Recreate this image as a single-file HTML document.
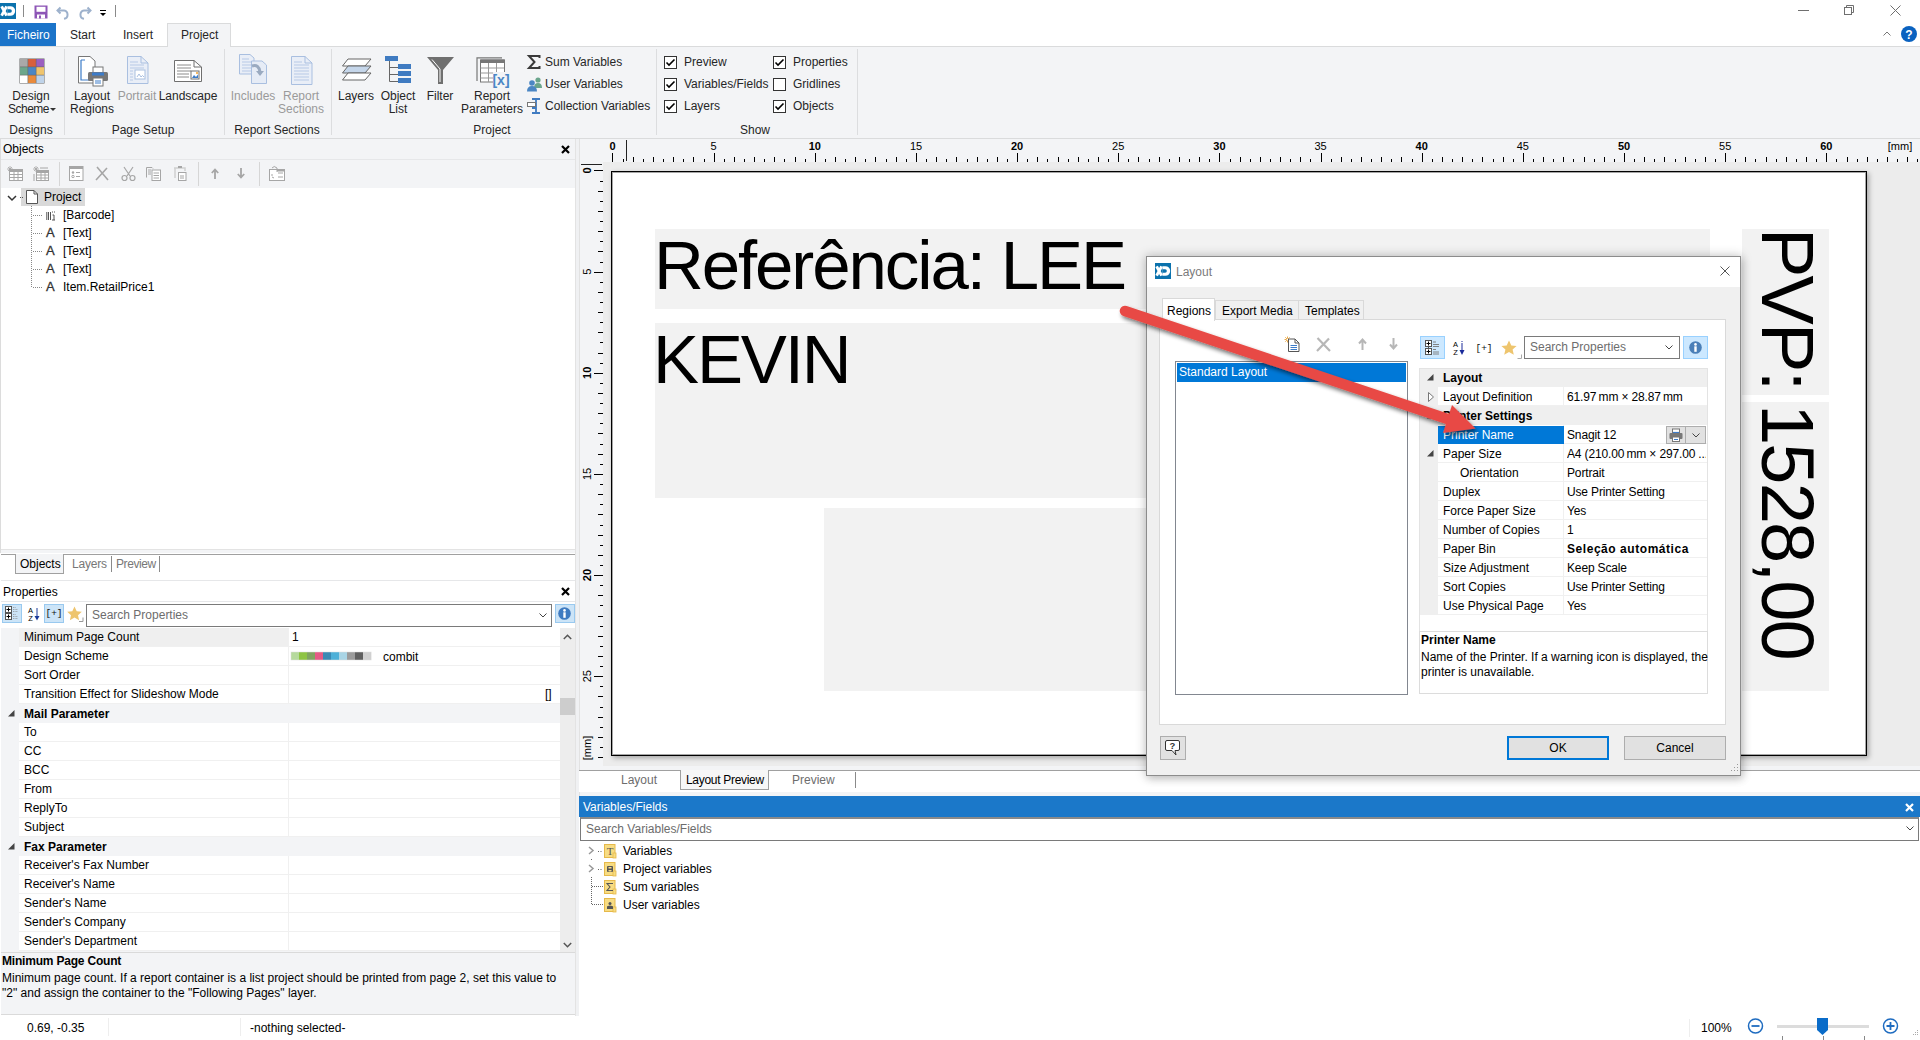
<!DOCTYPE html>
<html><head><meta charset="utf-8">
<style>
*{box-sizing:border-box;margin:0;padding:0}
html,body{width:1920px;height:1040px;overflow:hidden;background:#fff;font-family:"Liberation Sans",sans-serif;font-size:12px;color:#000}
.a{position:absolute}
.t{position:absolute;white-space:nowrap;line-height:14px}
svg{position:absolute;overflow:visible}
</style></head><body>
<div class="a" style="left:0px;top:0px;width:1920px;height:23px;background:#fff"></div>
<div class="a" style="left:0px;top:3px;width:16px;height:16px;background:#0b72ad"></div>
<svg style="left:0px;top:3px" width="16" height="16" viewBox="0 0 16 16"><path d="M1.6 3.4 L6.6 12.6 M6.6 3.4 L1.6 12.6" stroke="#fff" stroke-width="2.9"/><path fill="#fff" fill-rule="evenodd" d="M7.4 3.2 H10.4 A4.7 4.7 0 0 1 10.4 12.8 H7.4Z M7.6 6.3 H10.1 A1.75 1.75 0 0 1 10.1 9.8 H7.6Z"/></svg>
<div class="a" style="left:23px;top:5px;width:1px;height:12px;background:#8a8a8a"></div>
<svg style="left:34px;top:5px" width="14" height="14" viewBox="0 0 14 14"><rect x="0.5" y="0.5" width="13" height="13" fill="#8d55b6"/><rect x="2.5" y="1.8" width="9" height="5" fill="#fff"/><rect x="3" y="9.5" width="8" height="4" fill="#fff"/><rect x="5" y="10.5" width="2" height="3" fill="#8d55b6"/></svg>
<svg style="left:56px;top:6px" width="14" height="14" viewBox="0 0 14 14"><path d="M4.5 1.5 L1.5 4.5 L4.5 7.5" stroke="#9db1cc" stroke-width="2" fill="none"/><path d="M2 4.5 H8 A4.2 4.2 0 0 1 8 12.8" stroke="#9db1cc" stroke-width="2" fill="none"/></svg>
<svg style="left:78px;top:6px" width="14" height="14" viewBox="0 0 14 14"><path d="M9.5 1.5 L12.5 4.5 L9.5 7.5" stroke="#9db1cc" stroke-width="2" fill="none"/><path d="M12 4.5 H6 A4.2 4.2 0 0 0 6 12.8" stroke="#9db1cc" stroke-width="2" fill="none"/></svg>
<svg style="left:100px;top:10px" width="6" height="7" viewBox="0 0 6 7"><rect x="0" y="0" width="6" height="1" fill="#000"/><path d="M0 3 H6 L3 6Z" fill="#000"/></svg>
<div class="a" style="left:115px;top:5px;width:1px;height:12px;background:#8a8a8a"></div>
<div class="a" style="left:1798px;top:10px;width:11px;height:1px;background:#6f6f6f"></div>
<svg style="left:1844px;top:5px" width="11" height="11" viewBox="0 0 11 11"><rect x="0.5" y="2.5" width="7" height="7" fill="none" stroke="#6f6f6f"/><path d="M2.5 2.5 V0.5 H9.5 V7.5 H7.5" fill="none" stroke="#6f6f6f"/></svg>
<svg style="left:1890px;top:5px" width="11" height="11" viewBox="0 0 11 11"><path d="M0.5 0.5 L10.5 10.5 M10.5 0.5 L0.5 10.5" stroke="#6f6f6f" stroke-width="1"/></svg>
<div class="a" style="left:0px;top:23px;width:56px;height:23px;background:#1b74c9"></div>
<div class="t" style="left:7px;top:28px;color:#fff">Ficheiro</div>
<div class="t" style="left:70px;top:28px;color:#262626">Start</div>
<div class="t" style="left:123px;top:28px;color:#262626">Insert</div>
<div class="a" style="left:167px;top:23px;width:64px;height:24px;background:#f3f4f6;border:1px solid #dadbdc;border-bottom:none"></div>
<div class="t" style="left:181px;top:28px;color:#262626">Project</div>
<svg style="left:1883px;top:31px" width="8" height="5" viewBox="0 0 8 5"><path d="M0.5 4.5 L4 1 L7.5 4.5" stroke="#777" fill="none"/></svg>
<svg style="left:1901px;top:26px" width="16" height="16" viewBox="0 0 16 16"><circle cx="8" cy="8" r="8" fill="#0a62c0"/><text x="8" y="12.5" font-family="Liberation Sans" font-weight="bold" font-size="12" fill="#fff" text-anchor="middle">?</text></svg>
<div class="a" style="left:0px;top:46px;width:1920px;height:93px;background:#f3f4f6;border-top:1px solid #dadbdc;border-bottom:1px solid #dadbdc"></div>
<div class="a" style="left:168px;top:46px;width:62px;height:2px;background:#f3f4f6"></div>
<svg style="left:19px;top:58px" width="26" height="26" viewBox="0 0 26 26"><rect x="0.5" y="0.5" width="25" height="25" fill="#666"/><rect x="1.0" y="1.0" width="7.6" height="7.6" fill="#a9a9a9"/><rect x="9.2" y="1.0" width="7.6" height="7.6" fill="#d85f3c"/><rect x="17.4" y="1.0" width="7.6" height="7.6" fill="#9b5fc0"/><rect x="1.0" y="9.2" width="7.6" height="7.6" fill="#6ca68b"/><rect x="9.2" y="9.2" width="7.6" height="7.6" fill="#4b86c4"/><rect x="17.4" y="9.2" width="7.6" height="7.6" fill="#efc46d"/><rect x="1.0" y="17.4" width="7.6" height="7.6" fill="#ffffff"/><rect x="9.2" y="17.4" width="7.6" height="7.6" fill="#e98a3b"/><rect x="17.4" y="17.4" width="7.6" height="7.6" fill="#bfd3e9"/></svg>
<div class="t" style="left:-69px;width:200px;text-align:center;top:89px;color:#262626">Design</div>
<div class="t" style="left:8px;top:102px;color:#262626;letter-spacing:-0.5px">Scheme</div>
<svg style="left:50px;top:108px" width="6" height="3" viewBox="0 0 6 3"><path d="M0 0H6L3 3Z" fill="#333"/></svg>
<div class="t" style="left:-69px;width:200px;text-align:center;top:123px;color:#262626">Designs</div>
<div class="a" style="left:64px;top:49px;width:1px;height:86px;background:#dcdddf"></div>
<svg style="left:78px;top:56px" width="31" height="31" viewBox="0 0 31 31"><path d="M0.5 0.5 H12 L17 5 V27 H0.5Z" fill="#fff" stroke="#777"/><path d="M3 4 H7 M3 4 V24 H11" stroke="#3d7cc9" stroke-width="1.2" fill="none"/><rect x="15" y="11" width="10" height="6" fill="#fff" stroke="#777"/><rect x="10" y="16" width="20" height="9" rx="1.5" fill="#777"/><rect x="14" y="16.5" width="12" height="3" fill="#3d7cc9"/><rect x="15" y="22" width="10" height="8" fill="#fff" stroke="#777"/><path d="M17 25 H23 M17 27 H23" stroke="#3d7cc9"/></svg>
<div class="t" style="left:-8px;width:200px;text-align:center;top:89px;color:#262626">Layout</div>
<div class="t" style="left:-8px;width:200px;text-align:center;top:102px;color:#262626">Regions</div>
<svg style="left:127px;top:56px" width="22" height="28" viewBox="0 0 22 28"><path d="M0.5 0.5 H14 L21 7 V27.5 H0.5Z" fill="#e9eef7" stroke="#a9bfe0"/><path d="M14 0.5 V7 H21" fill="none" stroke="#a9bfe0"/><path d="M3 6 H11 M3 9 H17 M3 12 H17 M3 15 H6 M3 18 H6 M3 21 H6 M3 24 H6" stroke="#b7c9e6"/><rect x="8" y="14" width="10" height="9" fill="#fff" stroke="#a9bfe0"/><path d="M10 21 L12 18 L14 21 L15.5 19.5 L17 21" stroke="#a9bfe0" fill="none"/></svg>
<div class="t" style="left:37px;width:200px;text-align:center;top:89px;color:#9a9a9a">Portrait</div>
<svg style="left:174px;top:60px" width="28" height="22" viewBox="0 0 28 22"><path d="M0.5 0.5 H20 L27.5 7 V21.5 H0.5Z" fill="#fff" stroke="#6f6f6f"/><path d="M20 0.5 V7 H27.5" fill="none" stroke="#6f6f6f"/><path d="M3 5 H17 M3 8 H17 M3 11 H17 M3 14 H15 M3 17 H15" stroke="#8a8a8a"/><rect x="17" y="11" width="8" height="8" fill="#fff" stroke="#6f6f6f"/><path d="M18 18 L20 15 L22 17 L24 14.5 V18Z" fill="#3d7cc9"/><circle cx="23" cy="13" r="1" fill="#f0a030"/></svg>
<div class="t" style="left:88px;width:200px;text-align:center;top:89px;color:#262626">Landscape</div>
<div class="t" style="left:43px;width:200px;text-align:center;top:123px;color:#262626">Page Setup</div>
<div class="a" style="left:224px;top:49px;width:1px;height:86px;background:#dcdddf"></div>
<svg style="left:239px;top:54px" width="29" height="31" viewBox="0 0 29 31"><path d="M0.5 0.5 H11 L15 4 V20 H0.5Z" fill="#e9eef7" stroke="#a9bfe0"/><path d="M3 5 H10 M3 8 H12 M3 11 H12 M3 14 H12 M3 17 H12" stroke="#b7c9e6"/><path d="M12.5 7 H23 L27.5 11 V29.5 H12.5Z" fill="#e6ecf6" stroke="#a9bfe0"/><path d="M13 12 Q20 10 21 18" stroke="#9aaac0" stroke-width="3" fill="none"/><path d="M17 17 H25 L21 22Z" fill="#9aaac0"/></svg>
<div class="t" style="left:153px;width:200px;text-align:center;top:89px;color:#9a9a9a">Includes</div>
<svg style="left:291px;top:56px" width="22" height="29" viewBox="0 0 22 29"><path d="M0.5 0.5 H14 L21 7 V28.5 H0.5Z" fill="#e9eef7" stroke="#a9bfe0"/><path d="M14 0.5 V7 H21" fill="none" stroke="#a9bfe0"/><path d="M3 6 H11 M3 9 H18 M3 12 H18 M3 15 H18 M3 18 H18 M3 21 H18 M3 24 H18" stroke="#b7c9e6"/></svg>
<div class="t" style="left:201px;width:200px;text-align:center;top:89px;color:#9a9a9a">Report</div>
<div class="t" style="left:201px;width:200px;text-align:center;top:102px;color:#9a9a9a">Sections</div>
<div class="t" style="left:177px;width:200px;text-align:center;top:123px;color:#262626">Report Sections</div>
<div class="a" style="left:331px;top:49px;width:1px;height:86px;background:#dcdddf"></div>
<svg style="left:342px;top:58px" width="30" height="26" viewBox="0 0 30 26"><path d="M6 1 H29 L23 8 H0.5Z" fill="#fff" stroke="#666"/><path d="M6 8 H29 L23 15 H0.5Z" fill="#c5d6ea" stroke="#666"/><path d="M6 15 H29 L23 22 H0.5Z" fill="#fff" stroke="#666"/></svg>
<div class="t" style="left:256px;width:200px;text-align:center;top:89px;color:#262626">Layers</div>
<svg style="left:385px;top:56px" width="27" height="28" viewBox="0 0 27 28"><rect x="0" y="0" width="13" height="5" fill="#3f7bc1"/><path d="M4.5 5 V25.5 H13 M4.5 11.5 H13 M4.5 18.5 H13" stroke="#666" fill="none"/><rect x="13" y="8" width="13" height="5" fill="#3f7bc1"/><rect x="13" y="15" width="13" height="5" fill="#3f7bc1"/><rect x="13" y="22" width="13" height="5" fill="#3f7bc1"/></svg>
<div class="t" style="left:298px;width:200px;text-align:center;top:89px;color:#262626">Object</div>
<div class="t" style="left:298px;width:200px;text-align:center;top:102px;color:#262626">List</div>
<svg style="left:427px;top:57px" width="28" height="28" viewBox="0 0 28 28"><path d="M0 0 H27 L16 13 V27 H11 V13Z" fill="#6f6f6f"/><path d="M5 2.5 L13 12 V25" stroke="#fff" stroke-width="1" fill="none"/></svg>
<div class="t" style="left:340px;width:200px;text-align:center;top:89px;color:#262626">Filter</div>
<svg style="left:476px;top:57px" width="33" height="30" viewBox="0 0 33 30"><path d="M1 24 V0.8 H26" stroke="#777" stroke-width="1.2" fill="none"/><rect x="4.5" y="3" width="24" height="22" fill="#fff" stroke="#777"/><rect x="4.5" y="2.5" width="24" height="3.5" fill="#777"/><path d="M4.5 11 H28 M4.5 16 H28 M4.5 21 H28 M12.5 6 V25 M20.5 6 V25" stroke="#999"/><rect x="17" y="15" width="16" height="15" fill="#f3f4f6"/><text x="25" y="28" font-family="Liberation Sans" font-size="14" font-weight="bold" fill="#4a86c5" text-anchor="middle">[x]</text></svg>
<div class="t" style="left:392px;width:200px;text-align:center;top:89px;color:#262626">Report</div>
<div class="t" style="left:392px;width:200px;text-align:center;top:102px;color:#262626">Parameters</div>
<svg style="left:528px;top:55px" width="12" height="14" viewBox="0 0 12 14"><path d="M11.5 3 V1 H1 L6.5 7 L1 13 H11.5 V11" stroke="#3a3a3a" stroke-width="2" fill="none"/></svg>
<div class="t" style="left:545px;top:55px;color:#262626">Sum Variables</div>
<svg style="left:527px;top:77px" width="16" height="15" viewBox="0 0 16 15"><circle cx="11" cy="3" r="2.6" fill="#6aa58c"/><path d="M7 11 Q7 6 11 6 Q15 6 15 11Z" fill="#6aa58c"/><circle cx="5" cy="6" r="2.8" fill="#4b86c4"/><path d="M0 14.5 Q0 9 5 9 Q10 9 10 14.5Z" fill="#4b86c4"/></svg>
<div class="t" style="left:545px;top:77px;color:#262626">User Variables</div>
<svg style="left:527px;top:98px" width="15" height="16" viewBox="0 0 15 16"><path d="M5 1 H13 M9 1 V15 M5 15 H13 M5 10 H9" stroke="#3f7bc1" stroke-width="1.8" fill="none"/><rect x="0.5" y="4.5" width="8" height="4" fill="#fff" stroke="#777"/></svg>
<div class="t" style="left:545px;top:99px;color:#262626">Collection Variables</div>
<div class="t" style="left:392px;width:200px;text-align:center;top:123px;color:#262626">Project</div>
<div class="a" style="left:656px;top:49px;width:1px;height:86px;background:#dcdddf"></div>
<svg style="left:664px;top:56px" width="13" height="13" viewBox="0 0 13 13"><rect x="0.5" y="0.5" width="12" height="12" fill="#fff" stroke="#333"/><path d="M2.5 6.5 L5 9 L10.5 3.5" stroke="#000" stroke-width="1.6" fill="none"/></svg>
<div class="t" style="left:684px;top:55px;color:#262626">Preview</div>
<svg style="left:664px;top:78px" width="13" height="13" viewBox="0 0 13 13"><rect x="0.5" y="0.5" width="12" height="12" fill="#fff" stroke="#333"/><path d="M2.5 6.5 L5 9 L10.5 3.5" stroke="#000" stroke-width="1.6" fill="none"/></svg>
<div class="t" style="left:684px;top:77px;color:#262626">Variables/Fields</div>
<svg style="left:664px;top:100px" width="13" height="13" viewBox="0 0 13 13"><rect x="0.5" y="0.5" width="12" height="12" fill="#fff" stroke="#333"/><path d="M2.5 6.5 L5 9 L10.5 3.5" stroke="#000" stroke-width="1.6" fill="none"/></svg>
<div class="t" style="left:684px;top:99px;color:#262626">Layers</div>
<svg style="left:773px;top:56px" width="13" height="13" viewBox="0 0 13 13"><rect x="0.5" y="0.5" width="12" height="12" fill="#fff" stroke="#333"/><path d="M2.5 6.5 L5 9 L10.5 3.5" stroke="#000" stroke-width="1.6" fill="none"/></svg>
<div class="t" style="left:793px;top:55px;color:#262626">Properties</div>
<svg style="left:773px;top:78px" width="13" height="13" viewBox="0 0 13 13"><rect x="0.5" y="0.5" width="12" height="12" fill="#fff" stroke="#333"/></svg>
<div class="t" style="left:793px;top:77px;color:#262626">Gridlines</div>
<svg style="left:773px;top:100px" width="13" height="13" viewBox="0 0 13 13"><rect x="0.5" y="0.5" width="12" height="12" fill="#fff" stroke="#333"/><path d="M2.5 6.5 L5 9 L10.5 3.5" stroke="#000" stroke-width="1.6" fill="none"/></svg>
<div class="t" style="left:793px;top:99px;color:#262626">Objects</div>
<div class="t" style="left:655px;width:200px;text-align:center;top:123px;color:#262626">Show</div>
<div class="a" style="left:857px;top:49px;width:1px;height:86px;background:#dcdddf"></div>
<div class="a" style="left:0px;top:139px;width:576px;height:414px;background:#f3f4f6"></div>
<div class="a" style="left:0px;top:139px;width:1px;height:414px;background:#dcdcdc"></div>
<div class="a" style="left:575px;top:139px;width:1px;height:877px;background:#e3e3e3"></div>
<div class="t" style="left:3px;top:142px;">Objects</div>
<svg style="left:561px;top:145px" width="9" height="9" viewBox="0 0 9 9"><path d="M1 1 L8 8 M8 1 L1 8" stroke="#000" stroke-width="2.2"/></svg>
<div class="a" style="left:1px;top:159px;width:574px;height:1px;background:#e6e7e9"></div>
<svg style="left:7px;top:166px" width="16" height="15" viewBox="0 0 16 15"><path d="M3 0V6M0 3H6M1 1L5 5M5 1L1 5" stroke="#a6a6a6" stroke-width="0.8"/><rect x="2.5" y="3.5" width="13" height="11" fill="#fff" stroke="#a6a6a6"/><rect x="2.5" y="3.5" width="13" height="2.5" fill="#a6a6a6"/><path d="M2.5 8.5H15.5M2.5 11.5H15.5M7 6V14.5M11 6V14.5" stroke="#a6a6a6"/></svg>
<svg style="left:33px;top:166px" width="16" height="15" viewBox="0 0 16 15"><path d="M3 0V6M0 3H6M1 1L5 5M5 1L1 5" stroke="#a6a6a6" stroke-width="0.8"/><path d="M1 8V15" stroke="#a6a6a6"/><rect x="3.5" y="4.5" width="12" height="10" fill="#fff" stroke="#a6a6a6"/><rect x="3.5" y="4.5" width="12" height="2.5" fill="#a6a6a6"/><path d="M3.5 9H15.5M3.5 12H15.5M8 7V14.5M12 7V14.5" stroke="#a6a6a6"/><path d="M7 2H15" stroke="#a6a6a6"/></svg>
<div class="a" style="left:59px;top:162px;width:1px;height:24px;background:#d6d6d6"></div>
<svg style="left:69px;top:166px" width="15" height="15" viewBox="0 0 15 15"><rect x="0.5" y="0.5" width="13.5" height="14" fill="#fff" stroke="#a6a6a6"/><rect x="0.5" y="0.5" width="13.5" height="2.5" fill="#a6a6a6"/><circle cx="4" cy="6.5" r="1.2" fill="#a6a6a6"/><circle cx="4" cy="10.5" r="1.2" fill="none" stroke="#a6a6a6"/><path d="M7 6.5H11M7 10.5H11" stroke="#a6a6a6"/></svg>
<svg style="left:95px;top:166px" width="15" height="15" viewBox="0 0 15 15"><path d="M1 14 L12 2 M2 1 L13 14" stroke="#a6a6a6" stroke-width="1.6"/></svg>
<svg style="left:121px;top:166px" width="15" height="15" viewBox="0 0 15 15"><path d="M3 1 L9 10 M12 1 L6 10" stroke="#a6a6a6" stroke-width="1.2"/><circle cx="3.5" cy="12" r="2.5" fill="none" stroke="#a6a6a6" stroke-width="1.2"/><circle cx="11.5" cy="12" r="2.5" fill="none" stroke="#a6a6a6" stroke-width="1.2"/></svg>
<svg style="left:146px;top:167px" width="15" height="14" viewBox="0 0 15 14"><path d="M0.5 10.5 V0.5 H6 L7 1.5" fill="none" stroke="#a6a6a6"/><path d="M2 3H5M2 5H5M2 7H5" stroke="#a6a6a6"/><rect x="6" y="3" width="8.5" height="10.5" fill="#fff" stroke="#a6a6a6"/><path d="M7.5 6H13M7.5 8.5H13M7.5 11H13" stroke="#a6a6a6"/></svg>
<svg style="left:174px;top:166px" width="13" height="15" viewBox="0 0 13 15"><path d="M0 2 H11 V5" stroke="#d0d0d0" stroke-width="1.5" fill="none"/><path d="M1 2 V12" stroke="#d0d0d0" stroke-width="1.5"/><rect x="4" y="0" width="4" height="2" fill="#a6a6a6"/><rect x="4.5" y="6.5" width="7.5" height="8" fill="#fff" stroke="#a6a6a6"/><path d="M6 10H10M6 12H10" stroke="#a6a6a6"/></svg>
<div class="a" style="left:198px;top:162px;width:1px;height:24px;background:#d6d6d6"></div>
<svg style="left:211px;top:168px" width="8" height="11" viewBox="0 0 8 11"><path d="M4 11V2 M0.8 5 L4 1.5 L7.2 5" stroke="#a6a6a6" stroke-width="1.8" fill="none"/></svg>
<svg style="left:237px;top:168px" width="8" height="11" viewBox="0 0 8 11"><path d="M4 0V9 M0.8 6 L4 9.5 L7.2 6" stroke="#a6a6a6" stroke-width="1.8" fill="none"/></svg>
<div class="a" style="left:259px;top:162px;width:1px;height:24px;background:#d6d6d6"></div>
<svg style="left:269px;top:166px" width="16" height="15" viewBox="0 0 16 15"><rect x="0.5" y="3.5" width="15" height="11" fill="#fff" stroke="#a6a6a6"/><rect x="8" y="3.5" width="7.5" height="2" fill="#a6a6a6"/><path d="M3 2 Q5 -1 8 2 V6" stroke="#a6a6a6" fill="none"/><path d="M9 7H14M9 11H14M3 8 L3 10 M3 11 L5 12" stroke="#a6a6a6"/></svg>
<div class="a" style="left:1px;top:188px;width:574px;height:361px;background:#fff"></div>
<div class="a" style="left:21px;top:188px;width:64px;height:18px;background:#d9d9d9"></div>
<svg style="left:7px;top:195px" width="10" height="6" viewBox="0 0 10 6"><path d="M1 1 L5 5 L9 1" stroke="#333" stroke-width="1.5" fill="none"/></svg>
<svg style="left:20px;top:197px" width="5" height="1" viewBox="0 0 5 1"><path d="M0 0.5H1M2 0.5H3" stroke="#555"/></svg>
<svg style="left:26px;top:190px" width="12" height="14" viewBox="0 0 12 14"><path d="M0.5 0.5 H8 L11.5 4 V13.5 H0.5Z" fill="#fff" stroke="#555"/><path d="M8 0.5V4H11.5" fill="none" stroke="#555"/></svg>
<div class="t" style="left:44px;top:190px;">Project</div>
<svg style="left:31px;top:206px" width="12" height="82" viewBox="0 0 12 82"><rect x="0" y="0" width="1" height="1" fill="#888"/><rect x="0" y="2" width="1" height="1" fill="#888"/><rect x="0" y="4" width="1" height="1" fill="#888"/><rect x="0" y="6" width="1" height="1" fill="#888"/><rect x="0" y="8" width="1" height="1" fill="#888"/><rect x="0" y="10" width="1" height="1" fill="#888"/><rect x="0" y="12" width="1" height="1" fill="#888"/><rect x="0" y="14" width="1" height="1" fill="#888"/><rect x="0" y="16" width="1" height="1" fill="#888"/><rect x="0" y="18" width="1" height="1" fill="#888"/><rect x="0" y="20" width="1" height="1" fill="#888"/><rect x="0" y="22" width="1" height="1" fill="#888"/><rect x="0" y="24" width="1" height="1" fill="#888"/><rect x="0" y="26" width="1" height="1" fill="#888"/><rect x="0" y="28" width="1" height="1" fill="#888"/><rect x="0" y="30" width="1" height="1" fill="#888"/><rect x="0" y="32" width="1" height="1" fill="#888"/><rect x="0" y="34" width="1" height="1" fill="#888"/><rect x="0" y="36" width="1" height="1" fill="#888"/><rect x="0" y="38" width="1" height="1" fill="#888"/><rect x="0" y="40" width="1" height="1" fill="#888"/><rect x="0" y="42" width="1" height="1" fill="#888"/><rect x="0" y="44" width="1" height="1" fill="#888"/><rect x="0" y="46" width="1" height="1" fill="#888"/><rect x="0" y="48" width="1" height="1" fill="#888"/><rect x="0" y="50" width="1" height="1" fill="#888"/><rect x="0" y="52" width="1" height="1" fill="#888"/><rect x="0" y="54" width="1" height="1" fill="#888"/><rect x="0" y="56" width="1" height="1" fill="#888"/><rect x="0" y="58" width="1" height="1" fill="#888"/><rect x="0" y="60" width="1" height="1" fill="#888"/><rect x="0" y="62" width="1" height="1" fill="#888"/><rect x="0" y="64" width="1" height="1" fill="#888"/><rect x="0" y="66" width="1" height="1" fill="#888"/><rect x="0" y="68" width="1" height="1" fill="#888"/><rect x="0" y="70" width="1" height="1" fill="#888"/><rect x="0" y="72" width="1" height="1" fill="#888"/><rect x="0" y="74" width="1" height="1" fill="#888"/><rect x="0" y="76" width="1" height="1" fill="#888"/><rect x="0" y="78" width="1" height="1" fill="#888"/><rect x="0" y="80" width="1" height="1" fill="#888"/><rect x="2" y="9" width="1" height="1" fill="#888"/><rect x="4" y="9" width="1" height="1" fill="#888"/><rect x="6" y="9" width="1" height="1" fill="#888"/><rect x="8" y="9" width="1" height="1" fill="#888"/><rect x="10" y="9" width="1" height="1" fill="#888"/><rect x="2" y="27" width="1" height="1" fill="#888"/><rect x="4" y="27" width="1" height="1" fill="#888"/><rect x="6" y="27" width="1" height="1" fill="#888"/><rect x="8" y="27" width="1" height="1" fill="#888"/><rect x="10" y="27" width="1" height="1" fill="#888"/><rect x="2" y="45" width="1" height="1" fill="#888"/><rect x="4" y="45" width="1" height="1" fill="#888"/><rect x="6" y="45" width="1" height="1" fill="#888"/><rect x="8" y="45" width="1" height="1" fill="#888"/><rect x="10" y="45" width="1" height="1" fill="#888"/><rect x="2" y="63" width="1" height="1" fill="#888"/><rect x="4" y="63" width="1" height="1" fill="#888"/><rect x="6" y="63" width="1" height="1" fill="#888"/><rect x="8" y="63" width="1" height="1" fill="#888"/><rect x="10" y="63" width="1" height="1" fill="#888"/><rect x="2" y="81" width="1" height="1" fill="#888"/><rect x="4" y="81" width="1" height="1" fill="#888"/><rect x="6" y="81" width="1" height="1" fill="#888"/><rect x="8" y="81" width="1" height="1" fill="#888"/><rect x="10" y="81" width="1" height="1" fill="#888"/></svg>
<svg style="left:46px;top:212px" width="9" height="8" viewBox="0 0 9 8"><path d="M0.8 0V8M2.5 0V8M4.5 0V8" stroke="#555" stroke-width="1"/><path d="M6 0H7M8 0H9M6.5 3H8V8M6 8H9" stroke="#555" stroke-width="1" fill="none"/></svg>
<div class="t" style="left:63px;top:208px;">[Barcode]</div>
<div class="t" style="left:46px;top:226px;color:#333;font-size:13px;-webkit-text-stroke:0.3px #333">A</div>
<div class="t" style="left:63px;top:226px;">[Text]</div>
<div class="t" style="left:46px;top:244px;color:#333;font-size:13px;-webkit-text-stroke:0.3px #333">A</div>
<div class="t" style="left:63px;top:244px;">[Text]</div>
<div class="t" style="left:46px;top:262px;color:#333;font-size:13px;-webkit-text-stroke:0.3px #333">A</div>
<div class="t" style="left:63px;top:262px;">[Text]</div>
<div class="t" style="left:46px;top:280px;color:#333;font-size:13px;-webkit-text-stroke:0.3px #333">A</div>
<div class="t" style="left:63px;top:280px;">Item.RetailPrice1</div>
<div class="a" style="left:1px;top:549px;width:574px;height:1px;background:#e3e3e3"></div>
<div class="a" style="left:1px;top:554px;width:574px;height:23px;background:#fff"></div>
<div class="a" style="left:1px;top:554px;width:14px;height:1px;background:#a0a0a0"></div>
<div class="a" style="left:63px;top:554px;width:512px;height:1px;background:#a0a0a0"></div>
<div class="a" style="left:15px;top:554px;width:49px;height:20px;background:#f3f4f6;border:1px solid #a0a0a0;border-top:none"></div>
<div class="t" style="left:20px;top:557px;">Objects</div>
<div class="t" style="left:72px;top:557px;color:#777;letter-spacing:-0.2px">Layers</div>
<div class="a" style="left:111px;top:556px;width:1px;height:16px;background:#8a8a8a"></div>
<div class="t" style="left:116px;top:557px;color:#777;letter-spacing:-0.4px">Preview</div>
<div class="a" style="left:159px;top:556px;width:1px;height:16px;background:#8a8a8a"></div>
<div class="a" style="left:1px;top:580px;width:574px;height:1px;background:#e6e7e9"></div>
<div class="t" style="left:3px;top:585px;">Properties</div>
<svg style="left:561px;top:587px" width="9" height="9" viewBox="0 0 9 9"><path d="M1 1 L8 8 M8 1 L1 8" stroke="#000" stroke-width="2.2"/></svg>
<div class="a" style="left:1px;top:601px;width:574px;height:1px;background:#e6e7e9"></div>
<div class="a" style="left:2px;top:604px;width:20px;height:19px;background:#cce4f7;border:1px solid #99c9ef"></div>
<svg style="left:5px;top:606px" width="14" height="15" viewBox="0 0 14 15"><rect x="0.5" y="0.5" width="6" height="6" fill="#fff" stroke="#555"/><path d="M3.5 1.5V5.5M1.5 3.5H5.5" stroke="#000"/><rect x="0.5" y="7.5" width="6" height="6" fill="#fff" stroke="#555"/><path d="M3.5 8.5V12.5M1.5 10.5H5.5" stroke="#000"/><path d="M8 1.5H11M8 3.5H13M8 5.5H13M8 8.5H11M8 10.5H13M8 12.5H13" stroke="#888" stroke-width="0.7" stroke-dasharray="1 0.6"/></svg>
<svg style="left:27px;top:606px" width="14" height="16" viewBox="0 0 14 16"><text x="3.5" y="7" font-family="Liberation Sans" font-size="7.5" text-anchor="middle" fill="#000">A</text><text x="3.5" y="14.5" font-family="Liberation Sans" font-size="7.5" text-anchor="middle" fill="#000">Z</text><path d="M10 2 V13" stroke="#1a3a9a" stroke-width="1"/><path d="M7.5 10 L10 14.5 L12.5 10Z" fill="#1a3a9a"/></svg>
<div class="a" style="left:44px;top:604px;width:20px;height:19px;background:#cce4f7;border:1px solid #99c9ef"></div>
<svg style="left:45px;top:607px" width="18" height="12" viewBox="0 0 18 12"><text x="9" y="9" font-family="Liberation Mono" font-size="9.5" text-anchor="middle" fill="#111">[+]</text></svg>
<svg style="left:67px;top:606px" width="17" height="16" viewBox="0 0 17 16"><path d="M7.5 0.5 L9.7 5.3 L14.8 5.8 L11 9.2 L12.1 14.3 L7.5 11.6 L2.9 14.3 L4 9.2 L0.2 5.8 L5.3 5.3Z" fill="#eec56e"/><path d="M12 15.5H16V11.5" stroke="#999" fill="none"/></svg>
<div class="a" style="left:86px;top:604px;width:466px;height:23px;background:#fff;border:1px solid #7a7a7a"></div>
<div class="t" style="left:92px;top:608px;color:#6d6d6d">Search Properties</div>
<svg style="left:539px;top:613px" width="8" height="5" viewBox="0 0 8 5"><path d="M0.5 0.5 L4 4 L7.5 0.5" stroke="#444" fill="none"/></svg>
<div class="a" style="left:555px;top:604px;width:20px;height:19px;background:#cce4f7;border:1px solid #99c9ef"></div>
<svg style="left:558px;top:607px" width="13" height="13" viewBox="0 0 13 13"><circle cx="6.5" cy="6.5" r="6.3" fill="#3f7bc1"/><rect x="5.3" y="5.3" width="2.4" height="5.5" fill="#fff"/><circle cx="6.5" cy="3.4" r="1.3" fill="#fff"/></svg>
<div class="a" style="left:1px;top:628px;width:559px;height:324px;background:#f3f4f6"></div>
<div class="a" style="left:19px;top:628px;width:541px;height:19px;background:#fff;border-bottom:1px solid #f0f0f0"></div>
<div class="a" style="left:19px;top:628px;width:269px;height:18px;background:#efefef"></div>
<div class="a" style="left:288px;top:628px;width:1px;height:19px;background:#f0f0f0"></div>
<div class="t" style="left:24px;top:630px;">Minimum Page Count</div>
<div class="t" style="left:292px;top:630px;">1</div>
<div class="a" style="left:19px;top:647px;width:541px;height:19px;background:#fff;border-bottom:1px solid #f0f0f0"></div>
<div class="a" style="left:288px;top:647px;width:1px;height:19px;background:#f0f0f0"></div>
<div class="t" style="left:24px;top:649px;">Design Scheme</div>
<svg style="left:291px;top:652px" width="81" height="8" viewBox="0 0 81 8"><rect x="0" y="0" width="8" height="8" fill="#b6da9d"/><rect x="8" y="0" width="8" height="8" fill="#8ec443"/><rect x="16" y="0" width="8" height="8" fill="#80a461"/><rect x="24" y="0" width="8" height="8" fill="#e45a85"/><rect x="32" y="0" width="8" height="8" fill="#3a89b4"/><rect x="40" y="0" width="8" height="8" fill="#4eb0d8"/><rect x="48" y="0" width="8" height="8" fill="#a9d5e6"/><rect x="56" y="0" width="8" height="8" fill="#9b9b9b"/><rect x="64" y="0" width="8" height="8" fill="#5f5f5f"/><rect x="72" y="0" width="8" height="8" fill="#d0d0d0"/><rect x="0" y="0" width="80.5" height="8" fill="none" stroke="#ddd" stroke-width="0.5"/></svg>
<div class="t" style="left:383px;top:650px;">combit</div>
<div class="a" style="left:19px;top:666px;width:541px;height:19px;background:#fff;border-bottom:1px solid #f0f0f0"></div>
<div class="a" style="left:288px;top:666px;width:1px;height:19px;background:#f0f0f0"></div>
<div class="t" style="left:24px;top:668px;">Sort Order</div>
<div class="a" style="left:19px;top:685px;width:541px;height:19px;background:#fff;border-bottom:1px solid #f0f0f0"></div>
<div class="a" style="left:288px;top:685px;width:1px;height:19px;background:#f0f0f0"></div>
<div class="t" style="left:24px;top:687px;">Transition Effect for Slideshow Mode</div>
<div class="t" style="left:545px;top:687px;">[]</div>
<svg style="left:8px;top:710px" width="7" height="7" viewBox="0 0 7 7"><path d="M6.5 0 V6.5 H0Z" fill="#444"/></svg>
<div class="t" style="left:24px;top:707px;font-weight:bold">Mail Parameter</div>
<div class="a" style="left:19px;top:723px;width:541px;height:19px;background:#fff;border-bottom:1px solid #f0f0f0"></div>
<div class="a" style="left:288px;top:723px;width:1px;height:19px;background:#f0f0f0"></div>
<div class="t" style="left:24px;top:725px;">To</div>
<div class="a" style="left:19px;top:742px;width:541px;height:19px;background:#fff;border-bottom:1px solid #f0f0f0"></div>
<div class="a" style="left:288px;top:742px;width:1px;height:19px;background:#f0f0f0"></div>
<div class="t" style="left:24px;top:744px;">CC</div>
<div class="a" style="left:19px;top:761px;width:541px;height:19px;background:#fff;border-bottom:1px solid #f0f0f0"></div>
<div class="a" style="left:288px;top:761px;width:1px;height:19px;background:#f0f0f0"></div>
<div class="t" style="left:24px;top:763px;">BCC</div>
<div class="a" style="left:19px;top:780px;width:541px;height:19px;background:#fff;border-bottom:1px solid #f0f0f0"></div>
<div class="a" style="left:288px;top:780px;width:1px;height:19px;background:#f0f0f0"></div>
<div class="t" style="left:24px;top:782px;">From</div>
<div class="a" style="left:19px;top:799px;width:541px;height:19px;background:#fff;border-bottom:1px solid #f0f0f0"></div>
<div class="a" style="left:288px;top:799px;width:1px;height:19px;background:#f0f0f0"></div>
<div class="t" style="left:24px;top:801px;">ReplyTo</div>
<div class="a" style="left:19px;top:818px;width:541px;height:19px;background:#fff;border-bottom:1px solid #f0f0f0"></div>
<div class="a" style="left:288px;top:818px;width:1px;height:19px;background:#f0f0f0"></div>
<div class="t" style="left:24px;top:820px;">Subject</div>
<svg style="left:8px;top:843px" width="7" height="7" viewBox="0 0 7 7"><path d="M6.5 0 V6.5 H0Z" fill="#444"/></svg>
<div class="t" style="left:24px;top:840px;font-weight:bold">Fax Parameter</div>
<div class="a" style="left:19px;top:856px;width:541px;height:19px;background:#fff;border-bottom:1px solid #f0f0f0"></div>
<div class="a" style="left:288px;top:856px;width:1px;height:19px;background:#f0f0f0"></div>
<div class="t" style="left:24px;top:858px;">Receiver's Fax Number</div>
<div class="a" style="left:19px;top:875px;width:541px;height:19px;background:#fff;border-bottom:1px solid #f0f0f0"></div>
<div class="a" style="left:288px;top:875px;width:1px;height:19px;background:#f0f0f0"></div>
<div class="t" style="left:24px;top:877px;">Receiver's Name</div>
<div class="a" style="left:19px;top:894px;width:541px;height:19px;background:#fff;border-bottom:1px solid #f0f0f0"></div>
<div class="a" style="left:288px;top:894px;width:1px;height:19px;background:#f0f0f0"></div>
<div class="t" style="left:24px;top:896px;">Sender's Name</div>
<div class="a" style="left:19px;top:913px;width:541px;height:19px;background:#fff;border-bottom:1px solid #f0f0f0"></div>
<div class="a" style="left:288px;top:913px;width:1px;height:19px;background:#f0f0f0"></div>
<div class="t" style="left:24px;top:915px;">Sender's Company</div>
<div class="a" style="left:19px;top:932px;width:541px;height:19px;background:#fff;border-bottom:1px solid #f0f0f0"></div>
<div class="a" style="left:288px;top:932px;width:1px;height:19px;background:#f0f0f0"></div>
<div class="t" style="left:24px;top:934px;">Sender's Department</div>
<div class="a" style="left:560px;top:628px;width:15px;height:324px;background:#ededed"></div>
<svg style="left:563px;top:634px" width="9" height="6" viewBox="0 0 9 6"><path d="M0.8 5 L4.5 1.3 L8.2 5" stroke="#555" stroke-width="1.5" fill="none"/></svg>
<svg style="left:563px;top:942px" width="9" height="6" viewBox="0 0 9 6"><path d="M0.8 1 L4.5 4.7 L8.2 1" stroke="#555" stroke-width="1.5" fill="none"/></svg>
<div class="a" style="left:560px;top:698px;width:15px;height:17px;background:#cdcdcd"></div>
<div class="a" style="left:1px;top:952px;width:574px;height:63px;background:#f3f4f6;border-top:1px solid #dadada;border-bottom:1px solid #dadada"></div>
<div class="t" style="left:2px;top:954px;font-weight:bold;letter-spacing:-0.2px">Minimum Page Count</div>
<div class="t" style="left:2px;top:971px;">Minimum page count. If a report container is a list project should be printed from page 2, set this value to</div>
<div class="t" style="left:2px;top:986px;">"2" and assign the container to the "Following Pages" layer.</div>
<div class="a" style="left:0px;top:1016px;width:1920px;height:24px;background:#fff"></div>
<div class="t" style="left:27px;top:1021px;">0.69, -0.35</div>
<div class="a" style="left:108px;top:1018px;width:1px;height:18px;background:#eee"></div>
<div class="a" style="left:240px;top:1018px;width:1px;height:18px;background:#eee"></div>
<div class="t" style="left:250px;top:1021px;">-nothing selected-</div>
<div class="a" style="left:576px;top:139px;width:4px;height:877px;background:#f0f1f3"></div>
<div class="a" style="left:579px;top:139px;width:1px;height:877px;background:#e2e2e2"></div>
<div class="a" style="left:580px;top:139px;width:1340px;height:23px;background:#f3f4f6"></div>
<div class="a" style="left:580px;top:162px;width:23px;height:604px;background:#f3f4f6"></div>
<div class="a" style="left:603px;top:162px;width:1317px;height:604px;background:#ececec"></div>
<svg style="left:580px;top:139px" width="1340" height="23" viewBox="0 0 1340 23"><path d="M32.5 14V23" stroke="#000"/><path d="M43.5 20V23" stroke="#000"/><path d="M53.5 18V23" stroke="#000"/><path d="M63.5 20V23" stroke="#000"/><path d="M73.5 18V23" stroke="#000"/><path d="M83.5 20V23" stroke="#000"/><path d="M93.5 18V23" stroke="#000"/><path d="M103.5 20V23" stroke="#000"/><path d="M113.5 18V23" stroke="#000"/><path d="M124.5 20V23" stroke="#000"/><path d="M134.5 14V23" stroke="#000"/><path d="M144.5 20V23" stroke="#000"/><path d="M154.5 18V23" stroke="#000"/><path d="M164.5 20V23" stroke="#000"/><path d="M174.5 18V23" stroke="#000"/><path d="M184.5 20V23" stroke="#000"/><path d="M194.5 18V23" stroke="#000"/><path d="M204.5 20V23" stroke="#000"/><path d="M215.5 18V23" stroke="#000"/><path d="M225.5 20V23" stroke="#000"/><path d="M235.5 14V23" stroke="#000"/><path d="M245.5 20V23" stroke="#000"/><path d="M255.5 18V23" stroke="#000"/><path d="M265.5 20V23" stroke="#000"/><path d="M275.5 18V23" stroke="#000"/><path d="M285.5 20V23" stroke="#000"/><path d="M295.5 18V23" stroke="#000"/><path d="M306.5 20V23" stroke="#000"/><path d="M316.5 18V23" stroke="#000"/><path d="M326.5 20V23" stroke="#000"/><path d="M336.5 14V23" stroke="#000"/><path d="M346.5 20V23" stroke="#000"/><path d="M356.5 18V23" stroke="#000"/><path d="M366.5 20V23" stroke="#000"/><path d="M376.5 18V23" stroke="#000"/><path d="M387.5 20V23" stroke="#000"/><path d="M397.5 18V23" stroke="#000"/><path d="M407.5 20V23" stroke="#000"/><path d="M417.5 18V23" stroke="#000"/><path d="M427.5 20V23" stroke="#000"/><path d="M437.5 14V23" stroke="#000"/><path d="M447.5 20V23" stroke="#000"/><path d="M457.5 18V23" stroke="#000"/><path d="M467.5 20V23" stroke="#000"/><path d="M478.5 18V23" stroke="#000"/><path d="M488.5 20V23" stroke="#000"/><path d="M498.5 18V23" stroke="#000"/><path d="M508.5 20V23" stroke="#000"/><path d="M518.5 18V23" stroke="#000"/><path d="M528.5 20V23" stroke="#000"/><path d="M538.5 14V23" stroke="#000"/><path d="M548.5 20V23" stroke="#000"/><path d="M558.5 18V23" stroke="#000"/><path d="M569.5 20V23" stroke="#000"/><path d="M579.5 18V23" stroke="#000"/><path d="M589.5 20V23" stroke="#000"/><path d="M599.5 18V23" stroke="#000"/><path d="M609.5 20V23" stroke="#000"/><path d="M619.5 18V23" stroke="#000"/><path d="M629.5 20V23" stroke="#000"/><path d="M639.5 14V23" stroke="#000"/><path d="M650.5 20V23" stroke="#000"/><path d="M660.5 18V23" stroke="#000"/><path d="M670.5 20V23" stroke="#000"/><path d="M680.5 18V23" stroke="#000"/><path d="M690.5 20V23" stroke="#000"/><path d="M700.5 18V23" stroke="#000"/><path d="M710.5 20V23" stroke="#000"/><path d="M720.5 18V23" stroke="#000"/><path d="M730.5 20V23" stroke="#000"/><path d="M741.5 14V23" stroke="#000"/><path d="M751.5 20V23" stroke="#000"/><path d="M761.5 18V23" stroke="#000"/><path d="M771.5 20V23" stroke="#000"/><path d="M781.5 18V23" stroke="#000"/><path d="M791.5 20V23" stroke="#000"/><path d="M801.5 18V23" stroke="#000"/><path d="M811.5 20V23" stroke="#000"/><path d="M821.5 18V23" stroke="#000"/><path d="M832.5 20V23" stroke="#000"/><path d="M842.5 14V23" stroke="#000"/><path d="M852.5 20V23" stroke="#000"/><path d="M862.5 18V23" stroke="#000"/><path d="M872.5 20V23" stroke="#000"/><path d="M882.5 18V23" stroke="#000"/><path d="M892.5 20V23" stroke="#000"/><path d="M902.5 18V23" stroke="#000"/><path d="M913.5 20V23" stroke="#000"/><path d="M923.5 18V23" stroke="#000"/><path d="M933.5 20V23" stroke="#000"/><path d="M943.5 14V23" stroke="#000"/><path d="M953.5 20V23" stroke="#000"/><path d="M963.5 18V23" stroke="#000"/><path d="M973.5 20V23" stroke="#000"/><path d="M983.5 18V23" stroke="#000"/><path d="M993.5 20V23" stroke="#000"/><path d="M1004.5 18V23" stroke="#000"/><path d="M1014.5 20V23" stroke="#000"/><path d="M1024.5 18V23" stroke="#000"/><path d="M1034.5 20V23" stroke="#000"/><path d="M1044.5 14V23" stroke="#000"/><path d="M1054.5 20V23" stroke="#000"/><path d="M1064.5 18V23" stroke="#000"/><path d="M1074.5 20V23" stroke="#000"/><path d="M1084.5 18V23" stroke="#000"/><path d="M1095.5 20V23" stroke="#000"/><path d="M1105.5 18V23" stroke="#000"/><path d="M1115.5 20V23" stroke="#000"/><path d="M1125.5 18V23" stroke="#000"/><path d="M1135.5 20V23" stroke="#000"/><path d="M1145.5 14V23" stroke="#000"/><path d="M1155.5 20V23" stroke="#000"/><path d="M1165.5 18V23" stroke="#000"/><path d="M1175.5 20V23" stroke="#000"/><path d="M1186.5 18V23" stroke="#000"/><path d="M1196.5 20V23" stroke="#000"/><path d="M1206.5 18V23" stroke="#000"/><path d="M1216.5 20V23" stroke="#000"/><path d="M1226.5 18V23" stroke="#000"/><path d="M1236.5 20V23" stroke="#000"/><path d="M1246.5 14V23" stroke="#000"/><path d="M1256.5 20V23" stroke="#000"/><path d="M1267.5 18V23" stroke="#000"/><path d="M1277.5 20V23" stroke="#000"/><path d="M1287.5 18V23" stroke="#000"/><path d="M1297.5 20V23" stroke="#000"/><path d="M1307.5 18V23" stroke="#000"/><path d="M1317.5 20V23" stroke="#000"/><path d="M1327.5 18V23" stroke="#000"/><path d="M1337.5 20V23" stroke="#000"/><path d="M46.5 1V22" stroke="#222"/><text x="32.5" y="11" font-family="Liberation Sans" font-size="11" font-weight="bold" text-anchor="middle" fill="#000">0</text><text x="133.6" y="11" font-family="Liberation Sans" font-size="11" font-weight="normal" text-anchor="middle" fill="#000">5</text><text x="234.8" y="11" font-family="Liberation Sans" font-size="11" font-weight="bold" text-anchor="middle" fill="#000">10</text><text x="336.0" y="11" font-family="Liberation Sans" font-size="11" font-weight="normal" text-anchor="middle" fill="#000">15</text><text x="437.1" y="11" font-family="Liberation Sans" font-size="11" font-weight="bold" text-anchor="middle" fill="#000">20</text><text x="538.2" y="11" font-family="Liberation Sans" font-size="11" font-weight="normal" text-anchor="middle" fill="#000">25</text><text x="639.4" y="11" font-family="Liberation Sans" font-size="11" font-weight="bold" text-anchor="middle" fill="#000">30</text><text x="740.6" y="11" font-family="Liberation Sans" font-size="11" font-weight="normal" text-anchor="middle" fill="#000">35</text><text x="841.7" y="11" font-family="Liberation Sans" font-size="11" font-weight="bold" text-anchor="middle" fill="#000">40</text><text x="942.8" y="11" font-family="Liberation Sans" font-size="11" font-weight="normal" text-anchor="middle" fill="#000">45</text><text x="1044.0" y="11" font-family="Liberation Sans" font-size="11" font-weight="bold" text-anchor="middle" fill="#000">50</text><text x="1145.2" y="11" font-family="Liberation Sans" font-size="11" font-weight="normal" text-anchor="middle" fill="#000">55</text><text x="1246.3" y="11" font-family="Liberation Sans" font-size="11" font-weight="bold" text-anchor="middle" fill="#000">60</text><text x="1320" y="11" font-family="Liberation Sans" font-size="11" text-anchor="middle" fill="#000">[mm]</text></svg>
<svg style="left:580px;top:162px" width="23" height="604" viewBox="0 0 23 604"><path d="M14 8.5H23" stroke="#000"/><path d="M20 19.5H23" stroke="#000"/><path d="M18 29.5H23" stroke="#000"/><path d="M20 39.5H23" stroke="#000"/><path d="M18 49.5H23" stroke="#000"/><path d="M20 59.5H23" stroke="#000"/><path d="M18 69.5H23" stroke="#000"/><path d="M20 79.5H23" stroke="#000"/><path d="M18 89.5H23" stroke="#000"/><path d="M20 100.5H23" stroke="#000"/><path d="M14 110.5H23" stroke="#000"/><path d="M20 120.5H23" stroke="#000"/><path d="M18 130.5H23" stroke="#000"/><path d="M20 140.5H23" stroke="#000"/><path d="M18 150.5H23" stroke="#000"/><path d="M20 160.5H23" stroke="#000"/><path d="M18 170.5H23" stroke="#000"/><path d="M20 180.5H23" stroke="#000"/><path d="M18 191.5H23" stroke="#000"/><path d="M20 201.5H23" stroke="#000"/><path d="M14 211.5H23" stroke="#000"/><path d="M20 221.5H23" stroke="#000"/><path d="M18 231.5H23" stroke="#000"/><path d="M20 241.5H23" stroke="#000"/><path d="M18 251.5H23" stroke="#000"/><path d="M20 261.5H23" stroke="#000"/><path d="M18 271.5H23" stroke="#000"/><path d="M20 282.5H23" stroke="#000"/><path d="M18 292.5H23" stroke="#000"/><path d="M20 302.5H23" stroke="#000"/><path d="M14 312.5H23" stroke="#000"/><path d="M20 322.5H23" stroke="#000"/><path d="M18 332.5H23" stroke="#000"/><path d="M20 342.5H23" stroke="#000"/><path d="M18 352.5H23" stroke="#000"/><path d="M20 363.5H23" stroke="#000"/><path d="M18 373.5H23" stroke="#000"/><path d="M20 383.5H23" stroke="#000"/><path d="M18 393.5H23" stroke="#000"/><path d="M20 403.5H23" stroke="#000"/><path d="M14 413.5H23" stroke="#000"/><path d="M20 423.5H23" stroke="#000"/><path d="M18 433.5H23" stroke="#000"/><path d="M20 443.5H23" stroke="#000"/><path d="M18 454.5H23" stroke="#000"/><path d="M20 464.5H23" stroke="#000"/><path d="M18 474.5H23" stroke="#000"/><path d="M20 484.5H23" stroke="#000"/><path d="M18 494.5H23" stroke="#000"/><path d="M20 504.5H23" stroke="#000"/><path d="M14 514.5H23" stroke="#000"/><path d="M20 524.5H23" stroke="#000"/><path d="M18 534.5H23" stroke="#000"/><path d="M20 545.5H23" stroke="#000"/><path d="M18 555.5H23" stroke="#000"/><path d="M20 565.5H23" stroke="#000"/><path d="M18 575.5H23" stroke="#000"/><path d="M20 585.5H23" stroke="#000"/><path d="M18 595.5H23" stroke="#000"/><path d="M1 2.5H22" stroke="#222"/><text transform="translate(11 8.5) rotate(-90)" x="0" y="0" font-family="Liberation Sans" font-size="11" font-weight="bold" text-anchor="middle" fill="#000" dy="0">0</text><text transform="translate(11 109.6) rotate(-90)" x="0" y="0" font-family="Liberation Sans" font-size="11" font-weight="normal" text-anchor="middle" fill="#000" dy="0">5</text><text transform="translate(11 210.8) rotate(-90)" x="0" y="0" font-family="Liberation Sans" font-size="11" font-weight="bold" text-anchor="middle" fill="#000" dy="0">10</text><text transform="translate(11 311.9) rotate(-90)" x="0" y="0" font-family="Liberation Sans" font-size="11" font-weight="normal" text-anchor="middle" fill="#000" dy="0">15</text><text transform="translate(11 413.1) rotate(-90)" x="0" y="0" font-family="Liberation Sans" font-size="11" font-weight="bold" text-anchor="middle" fill="#000" dy="0">20</text><text transform="translate(11 514.2) rotate(-90)" x="0" y="0" font-family="Liberation Sans" font-size="11" font-weight="normal" text-anchor="middle" fill="#000" dy="0">25</text><text transform="translate(11 586) rotate(-90)" font-family="Liberation Sans" font-size="11" text-anchor="middle" fill="#000">[mm]</text></svg>
<div class="a" style="left:611px;top:171px;width:1256px;height:585px;background:#fff;border:1px solid #000;box-shadow:inset 0 0 0 1px rgba(0,0,0,0.35), 2px 2px 5px rgba(0,0,0,0.3)"></div>
<div class="a" style="left:655px;top:229px;width:1055px;height:80px;background:#f2f2f2"></div>
<div class="a" style="left:655px;top:323px;width:1055px;height:175px;background:#f2f2f2"></div>
<div class="a" style="left:824px;top:508px;width:886px;height:183px;background:#f2f2f2"></div>
<div class="a" style="left:1742px;top:229px;width:87px;height:166px;background:#f2f2f2"></div>
<div class="a" style="left:1742px;top:402px;width:87px;height:289px;background:#f2f2f2"></div>
<div class="t" id="ref" style="left:654px;top:228px;font-size:69px;line-height:76px;letter-spacing:-2.1px;color:#000">Referência: LEE</div>
<div class="t" id="kev" style="left:653px;top:322px;font-size:69px;line-height:76px;letter-spacing:-2.1px;color:#000">KEVIN</div>
<div class="t" id="pvp" style="left:1740px;top:228px;font-size:74px;line-height:80px;letter-spacing:-1.8px;color:#000;transform-origin:0 0;transform:translate(87px,0) rotate(90deg)">PVP:</div>
<div class="t" id="num" style="left:1740px;top:404px;font-size:74px;line-height:80px;letter-spacing:-1.8px;color:#000;transform-origin:0 0;transform:translate(87px,0) rotate(90deg)">1528,00</div>
<div class="a" style="left:580px;top:766px;width:1340px;height:31px;background:#f3f4f6"></div>
<div class="a" style="left:579px;top:770px;width:1341px;height:1px;background:#a0a0a0"></div>
<div class="a" style="left:579px;top:771px;width:1341px;height:21px;background:#fff"></div>
<div class="a" style="left:680px;top:770px;width:89px;height:20px;background:#f7f7f7;border:1px solid #a0a0a0;border-top:none"></div>
<div class="t" style="left:621px;top:773px;color:#6d6d6d">Layout</div>
<div class="t" style="left:686px;top:773px;letter-spacing:-0.3px">Layout Preview</div>
<div class="t" style="left:792px;top:773px;color:#6d6d6d">Preview</div>
<div class="a" style="left:855px;top:772px;width:1px;height:16px;background:#8a8a8a"></div>
<div class="a" style="left:579px;top:796px;width:1341px;height:220px;background:#fff"></div>
<div class="a" style="left:579px;top:796px;width:1341px;height:21px;background:#1b78c9"></div>
<div class="t" style="left:583px;top:800px;color:#fff">Variables/Fields</div>
<svg style="left:1905px;top:803px" width="9" height="9" viewBox="0 0 9 9"><path d="M1 1 L8 8 M8 1 L1 8" stroke="#fff" stroke-width="2.2"/></svg>
<div class="a" style="left:580px;top:817px;width:1339px;height:24px;background:#fff;border:1px solid #7a7a7a;border-top:2px solid #8a8a8a"></div>
<div class="t" style="left:586px;top:822px;color:#6d6d6d">Search Variables/Fields</div>
<svg style="left:1906px;top:826px" width="8" height="5" viewBox="0 0 8 5"><path d="M0.5 0.5 L4 4 L7.5 0.5" stroke="#444" fill="none"/></svg>
<svg style="left:588px;top:846px" width="6" height="9" viewBox="0 0 6 9"><path d="M1 1 L5 4.5 L1 8" stroke="#999" stroke-width="1.5" fill="none"/></svg>
<svg style="left:588px;top:864px" width="6" height="9" viewBox="0 0 6 9"><path d="M1 1 L5 4.5 L1 8" stroke="#999" stroke-width="1.5" fill="none"/></svg>
<svg style="left:591px;top:849px" width="13" height="58" viewBox="0 0 13 58"><path d="M7 2.5H12 M7 20.5H12" stroke="#666" stroke-dasharray="1 1.5"/><path d="M0.5 10V11 M0.5 28V56 M1 37.5H12 M1 55.5H12" stroke="#666" stroke-dasharray="1 1"/></svg>
<svg style="left:604px;top:844px" width="12" height="14" viewBox="0 0 12 14"><rect x="0.5" y="0.5" width="10.5" height="13" fill="#f7dc83" stroke="#e6b94a"/><rect x="9" y="9" width="3" height="5" fill="#f7dc83" stroke="#e6b94a" stroke-width="0.8"/><text x="6" y="11" font-family="Liberation Serif" font-size="11" text-anchor="middle" fill="#555">T</text></svg>
<div class="t" style="left:623px;top:844px;">Variables</div>
<svg style="left:604px;top:862px" width="12" height="14" viewBox="0 0 12 14"><rect x="0.5" y="0.5" width="10.5" height="13" fill="#f7dc83" stroke="#e6b94a"/><rect x="9" y="9" width="3" height="5" fill="#f7dc83" stroke="#e6b94a" stroke-width="0.8"/><rect x="3" y="4" width="6" height="6" rx="1" fill="#555"/><rect x="4.5" y="5" width="3" height="1.5" fill="#f7dc83"/><rect x="4.5" y="8" width="3" height="1.5" fill="#f7dc83"/></svg>
<div class="t" style="left:623px;top:862px;">Project variables</div>
<svg style="left:604px;top:880px" width="12" height="14" viewBox="0 0 12 14"><rect x="0.5" y="0.5" width="10.5" height="13" fill="#f7dc83" stroke="#e6b94a"/><rect x="9" y="9" width="3" height="5" fill="#f7dc83" stroke="#e6b94a" stroke-width="0.8"/><path d="M9 3.5H3L6 7L3 10.5H9" stroke="#555" stroke-width="1.1" fill="none"/></svg>
<div class="t" style="left:623px;top:880px;">Sum variables</div>
<svg style="left:604px;top:898px" width="12" height="14" viewBox="0 0 12 14"><rect x="0.5" y="0.5" width="10.5" height="13" fill="#f7dc83" stroke="#e6b94a"/><rect x="9" y="9" width="3" height="5" fill="#f7dc83" stroke="#e6b94a" stroke-width="0.8"/><circle cx="6" cy="5.5" r="1.5" fill="#555"/><path d="M3 11V9Q3 7.5 6 7.5Q9 7.5 9 9V11Z" fill="#555"/></svg>
<div class="t" style="left:623px;top:898px;">User variables</div>
<div class="a" style="left:1689px;top:1019px;width:1px;height:18px;background:#eee"></div>
<div class="t" style="left:1701px;top:1021px;">100%</div>
<svg style="left:1747px;top:1018px" width="17" height="17" viewBox="0 0 17 17"><circle cx="8.5" cy="8" r="7" fill="none" stroke="#1f6cc0" stroke-width="1.5"/><path d="M4.5 8H12.5" stroke="#1f6cc0" stroke-width="1.8"/></svg>
<div class="a" style="left:1777px;top:1025px;width:92px;height:3px;background:#dcdcdc"></div>
<svg style="left:1817px;top:1018px" width="11" height="17" viewBox="0 0 11 17"><path d="M0 0H11V12L5.5 17L0 12Z" fill="#0a6cc9"/></svg>
<svg style="left:1782px;top:1036px" width="84" height="4" viewBox="0 0 84 4"><path d="M0.5 0V4M41.5 0V4M82.5 0V4" stroke="#888"/></svg>
<svg style="left:1882px;top:1018px" width="17" height="17" viewBox="0 0 17 17"><circle cx="8.5" cy="8" r="7" fill="none" stroke="#1f6cc0" stroke-width="1.5"/><path d="M4.5 8H12.5M8.5 4V12" stroke="#1f6cc0" stroke-width="1.8"/></svg>
<svg style="left:1909px;top:1029px" width="10" height="10" viewBox="0 0 10 10"><path d="M8 1h1v1h-1zM6 3h1v1h-1zM8 3h1v1h-1zM4 5h1v1h-1zM6 5h1v1h-1zM8 5h1v1h-1z" fill="#aaa"/></svg>
<div class="a" style="left:1146px;top:256px;width:595px;height:520px;background:#f0f0f0;border:1px solid #8c8c8c;box-shadow:0 0 10px 1px rgba(0,0,0,0.18), 2px 3px 8px rgba(0,0,0,0.15)"></div>
<div class="a" style="left:1147px;top:257px;width:593px;height:30px;background:#fff"></div>
<div class="a" style="left:1155px;top:263px;width:16px;height:16px;background:#0b72ad"></div>
<svg style="left:1155px;top:263px" width="16" height="16" viewBox="0 0 16 16"><path d="M1.6 3.4 L6.6 12.6 M6.6 3.4 L1.6 12.6" stroke="#fff" stroke-width="2.9"/><path fill="#fff" fill-rule="evenodd" d="M7.4 3.2 H10.4 A4.7 4.7 0 0 1 10.4 12.8 H7.4Z M7.6 6.3 H10.1 A1.75 1.75 0 0 1 10.1 9.8 H7.6Z"/></svg>
<div class="t" style="left:1176px;top:265px;color:#7a7a7a">Layout</div>
<svg style="left:1720px;top:266px" width="10" height="10" viewBox="0 0 10 10"><path d="M0.5 0.5 L9.5 9.5 M9.5 0.5 L0.5 9.5" stroke="#555" stroke-width="1"/></svg>
<div class="a" style="left:1159px;top:319px;width:567px;height:406px;background:#fff;border:1px solid #d9d9d9"></div>
<div class="a" style="left:1215px;top:300px;width:84px;height:20px;background:#f0f0f0;border:1px solid #d9d9d9"></div>
<div class="a" style="left:1299px;top:300px;width:65px;height:20px;background:#f0f0f0;border:1px solid #d9d9d9;border-left:none"></div>
<div class="a" style="left:1162px;top:298px;width:53px;height:23px;background:#fff;border:1px solid #d9d9d9;border-bottom:none"></div>
<div class="t" style="left:1167px;top:304px;">Regions</div>
<div class="t" style="left:1222px;top:304px;">Export Media</div>
<div class="t" style="left:1305px;top:304px;">Templates</div>
<svg style="left:1284px;top:336px" width="16" height="16" viewBox="0 0 16 16"><g stroke="#e8a33a" stroke-width="0.9"><path d="M3.5 0.5V6.5M0.5 3.5H6.5M1.3 1.3L5.7 5.7M5.7 1.3L1.3 5.7"/></g><circle cx="3.5" cy="3.5" r="1.3" fill="#fff" stroke="#e8a33a" stroke-width="0.8"/><path d="M4.5 3 H11 L15 7 V15.5 H4.5Z" fill="#fff" stroke="#555"/><path d="M11 3V7H15" fill="none" stroke="#555"/><path d="M6.5 9.5H13M6.5 11.5H13M6.5 13.5H13" stroke="#3d7cc9"/></svg>
<svg style="left:1316px;top:337px" width="15" height="15" viewBox="0 0 15 15"><path d="M1 14 L13 1.5 M1.5 1 L14 14" stroke="#b7b7b7" stroke-width="2.2"/></svg>
<svg style="left:1358px;top:338px" width="9" height="12" viewBox="0 0 9 12"><path d="M4.5 12V2 M1 5.5 L4.5 1.5 L8 5.5" stroke="#b7b7b7" stroke-width="2" fill="none"/></svg>
<svg style="left:1389px;top:338px" width="9" height="12" viewBox="0 0 9 12"><path d="M4.5 0V10 M1 6.5 L4.5 10.5 L8 6.5" stroke="#b7b7b7" stroke-width="2" fill="none"/></svg>
<div class="a" style="left:1175px;top:361px;width:233px;height:334px;background:#fff;border:1px solid #828790"></div>
<div class="a" style="left:1177px;top:363px;width:229px;height:19px;background:#0078d7"></div>
<div class="t" style="left:1179px;top:365px;color:#fff">Standard Layout</div>
<div class="a" style="left:1420px;top:336px;width:25px;height:23px;background:#cce8ff;border:1px solid #99d1ff"></div>
<svg style="left:1425px;top:340px" width="14" height="15" viewBox="0 0 14 15"><rect x="0.5" y="0.5" width="6" height="6" fill="#fff" stroke="#555"/><path d="M3.5 1.5V5.5M1.5 3.5H5.5" stroke="#000"/><rect x="0.5" y="8.5" width="6" height="6" fill="#fff" stroke="#555"/><path d="M3.5 9.5V13.5M1.5 11.5H5.5" stroke="#000"/><path d="M3.5 6.5V8.5" stroke="#555"/><path d="M8 2H11M8 4.5H14M8 6.5H14M8 9.5H11M8 12H14M8 14H14" stroke="#777" stroke-width="0.9"/></svg>
<svg style="left:1452px;top:340px" width="14" height="16" viewBox="0 0 14 16"><text x="3.5" y="7" font-family="Liberation Sans" font-size="7.5" text-anchor="middle" fill="#000">A</text><text x="3.5" y="14.5" font-family="Liberation Sans" font-size="7.5" text-anchor="middle" fill="#000">Z</text><path d="M10 1V2M10 3V12" stroke="#1a2a9a" stroke-width="1"/><path d="M7.5 10 L10 15 L12.5 10Z" fill="#1a2a9a"/></svg>
<svg style="left:1475px;top:342px" width="18" height="12" viewBox="0 0 18 12"><text x="9" y="9" font-family="Liberation Mono" font-size="9.5" text-anchor="middle" fill="#111">[+]</text></svg>
<svg style="left:1501px;top:340px" width="22" height="20" viewBox="0 0 22 20"><path d="M8 0.5 L10.3 5.6 L15.6 6.1 L11.6 9.6 L12.8 14.8 L8 12 L3.2 14.8 L4.4 9.6 L0.4 6.1 L5.7 5.6Z" fill="#eec56e"/><path d="M16.5 18.5H20.5V14.5" stroke="#aaa" fill="none"/></svg>
<div class="a" style="left:1524px;top:336px;width:156px;height:23px;background:#fff;border:1px solid #7a7a7a"></div>
<div class="t" style="left:1530px;top:340px;color:#6d6d6d">Search Properties</div>
<svg style="left:1665px;top:345px" width="8" height="5" viewBox="0 0 8 5"><path d="M0.5 0.5 L4 4 L7.5 0.5" stroke="#444" fill="none"/></svg>
<div class="a" style="left:1683px;top:336px;width:25px;height:23px;background:#cce8ff;border:1px solid #99d1ff"></div>
<svg style="left:1689px;top:341px" width="13" height="13" viewBox="0 0 13 13"><circle cx="6.5" cy="6.5" r="6.3" fill="#4a7fb8"/><rect x="5.3" y="5.3" width="2.4" height="5.5" fill="#fff"/><circle cx="6.5" cy="3.4" r="1.3" fill="#fff"/></svg>
<div class="a" style="left:1419px;top:368px;width:289px;height:263px;background:#fff;border:1px solid #e3e3e3;border-bottom:none"></div>
<div class="a" style="left:1420px;top:369px;width:287px;height:246px;background:#efefef"></div>
<svg style="left:1427px;top:374px" width="7" height="7" viewBox="0 0 7 7"><path d="M6.5 0 V6.5 H0Z" fill="#444"/></svg>
<div class="t" style="left:1443px;top:371px;font-weight:bold">Layout</div>
<div class="a" style="left:1438px;top:387px;width:269px;height:19px;background:#fff;border-bottom:1px solid #f0f0f0"></div>
<div class="a" style="left:1563px;top:387px;width:1px;height:19px;background:#f0f0f0"></div>
<div class="t" style="left:1443px;top:390px;">Layout Definition</div>
<svg style="left:1428px;top:392px" width="6" height="10" viewBox="0 0 6 10"><path d="M0.5 0.5 L5.5 5 L0.5 9.5Z" fill="#fff" stroke="#777"/></svg>
<div class="t" style="left:1567px;top:390px;letter-spacing:-0.15px;overflow:hidden;width:139px">61.97 mm × 28.87 mm</div>
<svg style="left:1427px;top:412px" width="7" height="7" viewBox="0 0 7 7"><path d="M6.5 0 V6.5 H0Z" fill="#444"/></svg>
<div class="t" style="left:1443px;top:409px;font-weight:bold">Printer Settings</div>
<div class="a" style="left:1438px;top:425px;width:269px;height:19px;background:#fff;border-bottom:1px solid #f0f0f0"></div>
<div class="a" style="left:1563px;top:425px;width:1px;height:19px;background:#f0f0f0"></div>
<div class="a" style="left:1438px;top:426px;width:126px;height:18px;background:#0078d7"></div>
<div class="t" style="left:1443px;top:428px;color:#fff">Printer Name</div>
<div class="a" style="left:1666px;top:426px;width:20px;height:18px;background:#e1e1e1;border:1px solid #adadad"></div>
<svg style="left:1669px;top:428px" width="14" height="14" viewBox="0 0 14 14"><rect x="3.5" y="1" width="7" height="4" fill="#fff" stroke="#777"/><path d="M4 4.5H10" stroke="#3d7cc9" stroke-width="1.2"/><rect x="0.5" y="5" width="13" height="6" rx="1" fill="#777"/><rect x="3.5" y="9" width="7" height="4.5" fill="#fff" stroke="#777"/><path d="M5 11.5H9" stroke="#3d7cc9"/></svg>
<div class="a" style="left:1685px;top:426px;width:21px;height:18px;background:#e1e1e1;border:1px solid #adadad"></div>
<svg style="left:1692px;top:433px" width="8" height="5" viewBox="0 0 8 5"><path d="M0.5 0.5 L4 4 L7.5 0.5" stroke="#444" fill="none"/></svg>
<div class="t" style="left:1567px;top:428px;letter-spacing:-0.15px;overflow:hidden;width:139px">Snagit 12</div>
<div class="a" style="left:1438px;top:444px;width:269px;height:19px;background:#fff;border-bottom:1px solid #f0f0f0"></div>
<div class="a" style="left:1563px;top:444px;width:1px;height:19px;background:#f0f0f0"></div>
<div class="t" style="left:1443px;top:447px;">Paper Size</div>
<svg style="left:1427px;top:450px" width="7" height="7" viewBox="0 0 7 7"><path d="M6.5 0 V6.5 H0Z" fill="#444"/></svg>
<div class="t" style="left:1567px;top:447px;letter-spacing:-0.15px;overflow:hidden;width:139px">A4 (210.00 mm × 297.00 ...</div>
<div class="a" style="left:1438px;top:463px;width:269px;height:19px;background:#fff;border-bottom:1px solid #f0f0f0"></div>
<div class="a" style="left:1563px;top:463px;width:1px;height:19px;background:#f0f0f0"></div>
<div class="t" style="left:1460px;top:466px;">Orientation</div>
<div class="t" style="left:1567px;top:466px;letter-spacing:-0.15px;overflow:hidden;width:139px">Portrait</div>
<div class="a" style="left:1438px;top:482px;width:269px;height:19px;background:#fff;border-bottom:1px solid #f0f0f0"></div>
<div class="a" style="left:1563px;top:482px;width:1px;height:19px;background:#f0f0f0"></div>
<div class="t" style="left:1443px;top:485px;">Duplex</div>
<div class="t" style="left:1567px;top:485px;letter-spacing:-0.15px;overflow:hidden;width:139px">Use Printer Setting</div>
<div class="a" style="left:1438px;top:501px;width:269px;height:19px;background:#fff;border-bottom:1px solid #f0f0f0"></div>
<div class="a" style="left:1563px;top:501px;width:1px;height:19px;background:#f0f0f0"></div>
<div class="t" style="left:1443px;top:504px;">Force Paper Size</div>
<div class="t" style="left:1567px;top:504px;letter-spacing:-0.15px;overflow:hidden;width:139px">Yes</div>
<div class="a" style="left:1438px;top:520px;width:269px;height:19px;background:#fff;border-bottom:1px solid #f0f0f0"></div>
<div class="a" style="left:1563px;top:520px;width:1px;height:19px;background:#f0f0f0"></div>
<div class="t" style="left:1443px;top:523px;">Number of Copies</div>
<div class="t" style="left:1567px;top:523px;letter-spacing:-0.15px;overflow:hidden;width:139px">1</div>
<div class="a" style="left:1438px;top:539px;width:269px;height:19px;background:#fff;border-bottom:1px solid #f0f0f0"></div>
<div class="a" style="left:1563px;top:539px;width:1px;height:19px;background:#f0f0f0"></div>
<div class="t" style="left:1443px;top:542px;">Paper Bin</div>
<div class="t" style="left:1567px;top:542px;letter-spacing:-0.15px;overflow:hidden;width:139px"><b style="letter-spacing:0.55px">Seleção automática</b></div>
<div class="a" style="left:1438px;top:558px;width:269px;height:19px;background:#fff;border-bottom:1px solid #f0f0f0"></div>
<div class="a" style="left:1563px;top:558px;width:1px;height:19px;background:#f0f0f0"></div>
<div class="t" style="left:1443px;top:561px;">Size Adjustment</div>
<div class="t" style="left:1567px;top:561px;letter-spacing:-0.15px;overflow:hidden;width:139px">Keep Scale</div>
<div class="a" style="left:1438px;top:577px;width:269px;height:19px;background:#fff;border-bottom:1px solid #f0f0f0"></div>
<div class="a" style="left:1563px;top:577px;width:1px;height:19px;background:#f0f0f0"></div>
<div class="t" style="left:1443px;top:580px;">Sort Copies</div>
<div class="t" style="left:1567px;top:580px;letter-spacing:-0.15px;overflow:hidden;width:139px">Use Printer Setting</div>
<div class="a" style="left:1438px;top:596px;width:269px;height:19px;background:#fff;border-bottom:1px solid #f0f0f0"></div>
<div class="a" style="left:1563px;top:596px;width:1px;height:19px;background:#f0f0f0"></div>
<div class="t" style="left:1443px;top:599px;">Use Physical Page</div>
<div class="t" style="left:1567px;top:599px;letter-spacing:-0.15px;overflow:hidden;width:139px">Yes</div>
<div class="a" style="left:1419px;top:615px;width:289px;height:16px;background:#fff;border-left:1px solid #e3e3e3;border-right:1px solid #e3e3e3"></div>
<div class="a" style="left:1419px;top:631px;width:289px;height:63px;background:#fff;border:1px solid #dcdcdc"></div>
<div class="t" style="left:1421px;top:633px;font-weight:bold">Printer Name</div>
<div class="t" style="left:1421px;top:650px;">Name of the Printer. If a warning icon is displayed, the</div>
<div class="t" style="left:1421px;top:665px;">printer is unavailable.</div>
<div class="a" style="left:1160px;top:736px;width:26px;height:24px;background:#e1e1e1;border:1px solid #adadad"></div>
<svg style="left:1165px;top:740px" width="15" height="16" viewBox="0 0 15 16"><path d="M2 0.5 H13 Q14.5 0.5 14.5 2 V9 Q14.5 10.5 13 10.5 H10 L11 15 L7 10.5 H2 Q0.5 10.5 0.5 9 V2 Q0.5 0.5 2 0.5Z" fill="#fff" stroke="#333"/><text x="7.5" y="9" font-family="Liberation Sans" font-weight="bold" font-size="9.5" text-anchor="middle" fill="#333">?</text></svg>
<div class="a" style="left:1507px;top:736px;width:102px;height:24px;background:#e1e1e1;border:2px solid #0078d7"></div>
<div class="t" style="left:1507px;width:102px;text-align:center;top:741px">OK</div>
<div class="a" style="left:1624px;top:736px;width:102px;height:24px;background:#e1e1e1;border:1px solid #adadad"></div>
<div class="t" style="left:1624px;width:102px;text-align:center;top:741px">Cancel</div>
<svg style="left:1731px;top:764px" width="8" height="8" viewBox="0 0 8 8"><path d="M6 0h1v1h-1zM3 3h1v1h-1zM6 3h1v1h-1zM0 6h1v1h-1zM3 6h1v1h-1zM6 6h1v1h-1z" fill="#999"/></svg>
<svg style="left:0;top:0" width="1920" height="1040" viewBox="0 0 1920 1040"><defs><filter id="sh" x="-10%" y="-30%" width="130%" height="180%"><feGaussianBlur in="SourceAlpha" stdDeviation="2.2"/><feOffset dx="2" dy="3"/><feComponentTransfer><feFuncA type="linear" slope="0.55"/></feComponentTransfer><feMerge><feMergeNode/><feMergeNode in="SourceGraphic"/></feMerge></filter></defs><g filter="url(#sh)"><path d="M1125 311 L1447.5 419.0" stroke="#e84a44" stroke-width="10.5" stroke-linecap="round"/><path d="M1475.5 428.5 L1452 405 L1443 433Z" fill="#e84a44"/></g></svg>
</body></html>
